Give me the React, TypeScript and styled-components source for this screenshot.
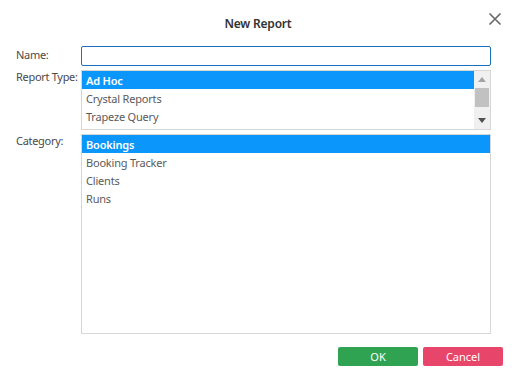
import React from 'react';
import styled, { createGlobalStyle } from 'styled-components';

const GlobalStyle = createGlobalStyle`
  html, body {
    margin: 0;
    padding: 0;
    background: #ffffff;
  }
  body {
    font-family: 'Noto Sans', 'Open Sans', sans-serif;
  }
`;

const Dialog = styled.div`
  position: relative;
  width: 516px;
  height: 380px;
  box-sizing: border-box;
  display: flex;
  flex-direction: column;
  background: #ffffff;
`;

const Header = styled.div`
  height: 46px;
  display: flex;
  align-items: flex-start;
  justify-content: center;
  padding-top: 16px;
  box-sizing: border-box;
`;

const Title = styled.div`
  font-size: 12px;
  font-weight: 600;
  color: #333333;
  line-height: 16px;
  letter-spacing: -0.2px;
`;

const CloseButton = styled.button`
  position: absolute;
  top: 12px;
  right: 14px;
  width: 14px;
  height: 14px;
  padding: 0;
  border: none;
  background: transparent;
  cursor: pointer;
  display: flex;
`;

const Form = styled.div`
  display: flex;
  flex-direction: column;
  gap: 4px;
  padding: 0 25px 0 16px;
`;

const Row = styled.div`
  display: grid;
  grid-template-columns: 65px 1fr;
  align-items: start;
`;

const Label = styled.label<{ $top?: number }>`
  font-size: 11px;
  color: #4a4a4a;
  line-height: 14px;
  padding-top: ${(p) => p.$top ?? 2}px;
  letter-spacing: -0.3px;
  white-space: nowrap;
`;

const TextInput = styled.input`
  height: 20px;
  box-sizing: border-box;
  border: 1px solid #1b6fc0;
  border-radius: 2px;
  outline: none;
  padding: 0 4px;
  font-size: 11px;
  font-family: inherit;
`;

const ListBox = styled.div<{ $height: number }>`
  height: ${(p) => p.$height}px;
  box-sizing: border-box;
  border: 1px solid #d6d6d6;
  display: flex;
  overflow: hidden;
`;

const Items = styled.div`
  flex: 1;
  display: flex;
  flex-direction: column;
`;

const Item = styled.div<{ $selected?: boolean }>`
  height: 18px;
  box-sizing: border-box;
  padding: 1px 0 0 4px;
  line-height: 18px;
  font-size: 11px;
  letter-spacing: -0.2px;
  color: ${(p) => (p.$selected ? '#ffffff' : '#5a5a5a')};
  background: ${(p) => (p.$selected ? '#0a96fb' : 'transparent')};
  font-weight: ${(p) => (p.$selected ? 600 : 400)};
`;

const Scrollbar = styled.div`
  width: 16px;
  background: #f0f0f0;
  display: flex;
  flex-direction: column;
  align-items: center;
`;

const ScrollArrow = styled.div<{ $bottom?: boolean }>`
  height: 17px;
  width: 16px;
  display: flex;
  align-items: center;
  justify-content: center;
  margin-top: ${(p) => (p.$bottom ? 'auto' : '0')};
`;

const Thumb = styled.div`
  width: 14px;
  height: 19px;
  background: #c1c1c1;
`;

const Footer = styled.div`
  margin-top: auto;
  display: flex;
  justify-content: flex-end;
  gap: 5px;
  padding: 0 13px 14px 0;
`;

const Button = styled.button<{ $variant: 'ok' | 'cancel' }>`
  width: 80px;
  height: 19px;
  border: none;
  border-radius: 2px;
  padding: 0;
  font-size: 11px;
  font-family: inherit;
  color: #ffffff;
  background: ${(p) => (p.$variant === 'ok' ? '#2fa352' : '#e8456a')};
  cursor: pointer;
`;

const reportTypes = ['Ad Hoc', 'Crystal Reports', 'Trapeze Query'];
const categories = ['Bookings', 'Booking Tracker', 'Clients', 'Runs'];

const App: React.FC = () => {
  return (
    <>
      <GlobalStyle />
      <Dialog>
        <Header>
          <Title>New Report</Title>
        </Header>
        <CloseButton aria-label="Close">
          <svg width="14" height="14" viewBox="0 0 14 14">
            <path d="M1.5 1.5 L12.5 12.5 M12.5 1.5 L1.5 12.5" stroke="#666666" strokeWidth="1.6" />
          </svg>
        </CloseButton>
        <Form>
          <Row>
            <Label $top={2}>Name:</Label>
            <TextInput />
          </Row>
          <Row>
            <Label $top={0}>Report Type:</Label>
            <ListBox $height={60}>
              <Items>
                {reportTypes.map((t, i) => (
                  <Item key={t} $selected={i === 0}>
                    {t}
                  </Item>
                ))}
              </Items>
              <Scrollbar>
                <ScrollArrow>
                  <svg width="8" height="5" viewBox="0 0 8 5">
                    <path d="M0 5 L4 0 L8 5 Z" fill="#a3a3a3" />
                  </svg>
                </ScrollArrow>
                <Thumb />
                <ScrollArrow $bottom>
                  <svg width="8" height="5" viewBox="0 0 8 5">
                    <path d="M0 0 L8 0 L4 5 Z" fill="#505050" />
                  </svg>
                </ScrollArrow>
              </Scrollbar>
            </ListBox>
          </Row>
          <Row>
            <Label $top={0}>Category:</Label>
            <ListBox $height={200}>
              <Items>
                {categories.map((c, i) => (
                  <Item key={c} $selected={i === 0}>
                    {c}
                  </Item>
                ))}
              </Items>
            </ListBox>
          </Row>
        </Form>
        <Footer>
          <Button $variant="ok">OK</Button>
          <Button $variant="cancel">Cancel</Button>
        </Footer>
      </Dialog>
    </>
  );
};

export default App;
